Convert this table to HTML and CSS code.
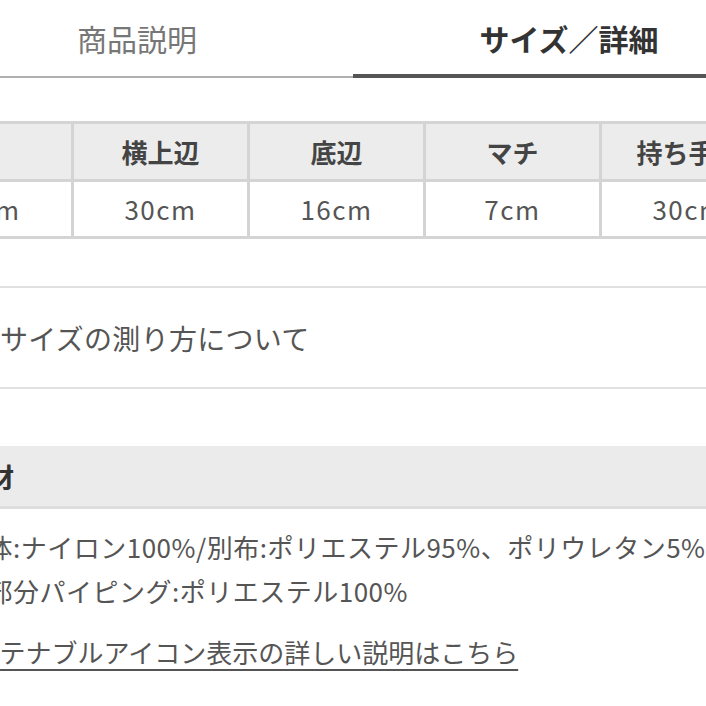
FILE: index.html
```html
<!DOCTYPE html>
<html lang="ja">
<head>
<meta charset="utf-8">
<title>サイズ／詳細</title>
<link rel="stylesheet" href="styles.css">
</head>
<body>
<div class="page">
  <nav class="tabs">
    <a class="tab">商品説明</a>
    <a class="tab tab-active">サイズ／詳細</a>
  </nav>

  <div class="table-wrap">
    <table class="size-table">
      <tr>
        <th>縦</th>
        <th>横上辺</th>
        <th>底辺</th>
        <th>マチ</th>
        <th>持ち手丈</th>
      </tr>
      <tr>
        <td>28cm</td>
        <td>30cm</td>
        <td>16cm</td>
        <td>7cm</td>
        <td>30cm</td>
      </tr>
    </table>
  </div>

  <div class="content">
    <a class="measure-link">
      <svg class="measure-icon" viewBox="0 0 28 28" width="28" height="28"><rect x="2" y="9" width="24" height="10" fill="none" stroke="#555" stroke-width="2"/><path d="M7 9v4M12 9v6M17 9v4M22 9v6" stroke="#555" stroke-width="2"/></svg>
      <span>サイズの測り方について</span>
    </a>

    <section class="material">
      <h3 class="section-title">素材</h3>
      <p class="material-text">本体:ナイロン100%/別布:ポリエステル95%、ポリウレタン5%</p>
      <p class="material-text">縁部分パイピング:ポリエステル100%</p>
      <p class="eco-line"><a class="eco-link">サステナブルアイコン表示の詳しい説明はこちら</a></p>
    </section>
  </div>
</div>
</body>
</html>
```

FILE: styles.css
```css
html, body {
  margin: 0;
  padding: 0;
  background: #fff;
  overflow: hidden;
}

body {
  font-family: "Noto Sans CJK JP", "Noto Sans", sans-serif;
  color: #555;
  width: 706px;
  height: 706px;
}

.page {
  width: 706px;
}

.tabs {
  display: flex;
  width: 864px;
  margin-left: -79px;
}

.tab {
  flex: 1;
  height: 78px;
  box-sizing: border-box;
  display: flex;
  align-items: center;
  justify-content: center;
  font-size: 30px;
  color: #777;
  border-bottom: 2px solid #b0b0b0;
}

.tab-active {
  font-weight: 700;
  color: #333;
  border-bottom: 4px solid #555;
  padding-top: 2px;
}

.table-wrap {
  margin-top: 43px;
  margin-left: -105px;
  width: 883px;
}

.size-table {
  width: 883px;
  border-collapse: collapse;
  table-layout: fixed;
}

.size-table th,
.size-table td {
  border: 3px solid #d4d4d4;
  text-align: center;
  font-size: 26px;
  padding: 0;
}

.size-table th {
  height: 55px;
  line-height: 50px;
  background: #ececec;
  color: #444;
  font-weight: 700;
}

.size-table td {
  height: 54px;
  line-height: 50px;
  color: #555;
  letter-spacing: 1.5px;
}

.content {
  margin-left: -40px;
  width: 746px;
}

.measure-link {
  margin-top: 47px;
  display: flex;
  align-items: center;
  gap: 12px;
  height: 99px;
  border-top: 2px solid #e0e0e0;
  border-bottom: 2px solid #e0e0e0;
  font-size: 28px;
  letter-spacing: 0.3px;
  color: #555;
}

.measure-icon {
  flex: none;
}

.material {
  margin-top: 57px;
}

.section-title {
  margin: 0;
  height: 60px;
  display: flex;
  align-items: center;
  background: #ebebeb;
  border-bottom: 3px solid #dedede;
  font-size: 27px;
  font-weight: 700;
  color: #333;
}

.material-text {
  margin: 0;
  font-size: 26px;
  line-height: 44px;
  letter-spacing: 0.5px;
  white-space: nowrap;
}

.material-text:first-of-type {
  margin-top: 16px;
}

.eco-line {
  margin: 17px 0 0 -12px;
  font-size: 26px;
  line-height: 44px;
}

.eco-link {
  color: #555;
  text-decoration: underline;
  text-underline-offset: 6px;
  text-decoration-thickness: 2px;
}
```
